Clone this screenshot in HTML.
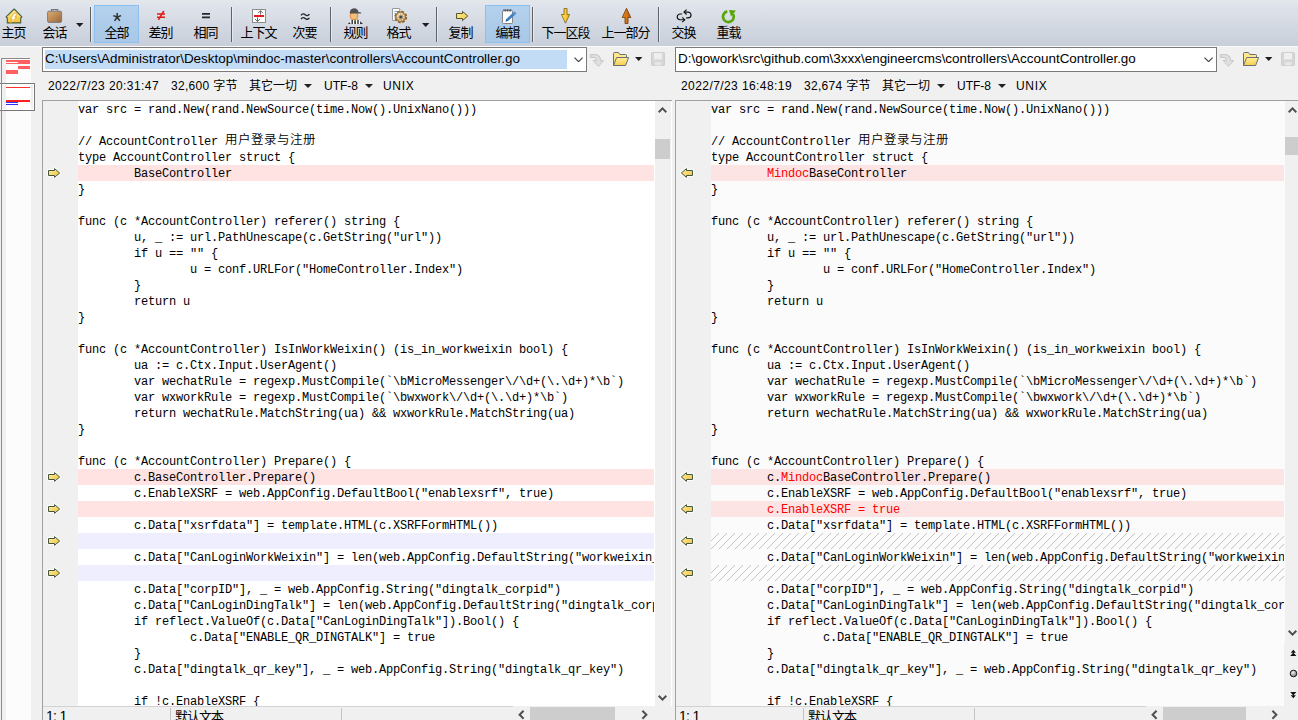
<!DOCTYPE html>
<html lang="zh-CN">
<head>
<meta charset="utf-8">
<title>AccountController.go &lt;--&gt; AccountController.go - 文本比较 - Beyond Compare</title>
<style>
*{box-sizing:border-box;margin:0;padding:0}
html,body{width:1298px;height:720px;overflow:hidden;background:#f0f0f0}
body{position:relative;font-family:"Liberation Sans","Noto Sans CJK SC",sans-serif;font-size:12px;color:#000}
.abs{position:absolute}
/* toolbar */
#tb{position:absolute;left:0;top:0;width:1298px;height:46px;background:linear-gradient(#e3e7ea 0,#e3e7ea 2px,#e0e4ec 4px,#d4d9e3 24px,#c8cfda 46px)}
#tbline{position:absolute;left:0;top:46px;width:1298px;height:1px;background:#fafafa}
.hl{position:absolute;top:5px;height:38px;background:linear-gradient(#b4d1ed,#a8c8e6);border:1px solid #8cc0f0}
.lb{position:absolute;top:24px;width:40px;height:17px;line-height:17px;font-size:13px;letter-spacing:-1px;text-indent:-1px;text-align:center;white-space:nowrap}
.lb{display:flex;justify-content:center}
.sep{position:absolute;top:7px;width:1px;height:35px;background:#5e6269;box-shadow:1px 0 0 rgba(255,255,255,.45)}
.dd{position:absolute;width:0;height:0;border-left:4px solid transparent;border-right:4px solid transparent;border-top:4px solid #222}
/* path combos */
.combo{position:absolute;top:47px;height:25px;border:1px solid #7a7a7a;background:#fff}
.combo .tx{position:absolute;left:1px;top:0;height:21px;line-height:21px;font-size:13.45px;white-space:nowrap;padding:0 1px}
.combo .sel{position:absolute;left:2px;top:2px;width:522px;height:19px;background:#c3dcf5}
.info{position:absolute;top:78px;height:17px;line-height:17px;font-size:12px;white-space:nowrap}
.info span{position:absolute;top:0}
/* editor */
.ed{position:absolute;top:100px;height:606px;border-top:1px solid #a0a0a0;border-left:1px solid #a0a0a0;overflow:hidden}
.gut{position:absolute;left:0;top:0;width:35px;height:606px;background:#f0f0f0}
.ga{position:absolute;left:4px}
.code{position:absolute;left:35px;top:0;height:606px;overflow:hidden;font-family:"Liberation Mono","Noto Sans CJK SC",monospace;font-size:12px;letter-spacing:-0.2px;white-space:pre}
.ln{height:16px;line-height:18px;overflow:visible}
.ln.d{background:#ffe3e3}
.ln.u{background:#eeeeff}
.rp .ln.d{background:#fde4e4}
.ln.h{background:repeating-linear-gradient(135deg,#c6c6c6 0,#c6c6c6 0.61px,#fbfbfb 0.71px,#fbfbfb 5.47px,#c6c6c6 5.57px,#c6c6c6 5.657px)}
.r{color:#f00}
.cj{font-family:"Noto Sans CJK SC",sans-serif;font-size:12.5px;letter-spacing:0.5px;line-height:0;position:relative;top:-1.5px;font-weight:350}
.vs{position:absolute;top:0;width:17px;background:#f0f0f0}
.vs.l{background:linear-gradient(90deg,#f0f0f0 16px,#fff 16px)}
.vs .th{position:absolute;left:0;width:15px;background:#cdcdcd}
.vs svg{position:absolute;left:3px}
.st{position:absolute;top:707px;height:13px;font-size:14px;letter-spacing:-0.7px;line-height:18px;white-space:nowrap;overflow:hidden}
.st.cjs{top:707px;height:13px;line-height:20px;font-size:13px;letter-spacing:-1px}
.hs{position:absolute;top:707px;height:13px;background:#f0f0f0}
.hs .th{position:absolute;top:0;height:13px;background:#cdcdcd}
</style>
</head>
<body>
<svg width="0" height="0" style="position:absolute">
<defs>
<linearGradient id="gy" x1="0" y1="0" x2="1" y2="1"><stop offset="0" stop-color="#fff0a0"/><stop offset="1" stop-color="#f0c040"/></linearGradient>
<g id="arR"><path d="M1.5 3.5H7.5V1.6L12.7 6L7.5 10.4V8.5H1.5Z" fill="none" stroke="#fff" stroke-opacity="0.85" stroke-width="2.8" stroke-linejoin="round"/><path d="M1.5 3.5H7.5V1.6L12.7 6L7.5 10.4V8.5H1.5Z" fill="url(#gy)" stroke="#45563c" stroke-width="1" stroke-linejoin="miter"/></g>
<g id="arL"><path d="M12.5 3.5H6.5V1.6L1.3 6L6.5 10.4V8.5H12.5Z" fill="none" stroke="#fff" stroke-opacity="0.85" stroke-width="2.8" stroke-linejoin="round"/><path d="M12.5 3.5H6.5V1.6L1.3 6L6.5 10.4V8.5H12.5Z" fill="url(#gy)" stroke="#45563c" stroke-width="1" stroke-linejoin="miter"/></g>
</defs>
</svg>

<div id="tb"></div>
<div id="tbline"></div>

<!-- toolbar buttons -->
<div id="tbbtns">
<div class="hl" style="left:94px;width:45px"></div>
<div class="hl" style="left:485px;width:45px"></div>
<div class="lb" style="left:-6px">主页</div>
<div class="lb" style="left:35px">会话</div>
<div class="lb" style="left:97px">全部</div>
<div class="lb" style="left:141px">差别</div>
<div class="lb" style="left:186px">相同</div>
<div class="lb" style="left:239px">上下文</div>
<div class="lb" style="left:285px">次要</div>
<div class="lb" style="left:336px">规则</div>
<div class="lb" style="left:379px">格式</div>
<div class="lb" style="left:441px">复制</div>
<div class="lb" style="left:488px">编辑</div>
<div class="lb" style="left:546px">下一区段</div>
<div class="lb" style="left:606px">上一部分</div>
<div class="lb" style="left:664px">交换</div>
<div class="lb" style="left:709px">重载</div>
<div class="sep" style="left:90px"></div>
<div class="sep" style="left:231px"></div>
<div class="sep" style="left:330px"></div>
<div class="sep" style="left:436px"></div>
<div class="sep" style="left:532px"></div>
<div class="sep" style="left:658px"></div>
<svg id="tbicons" class="abs" style="left:0;top:0" width="760" height="46" viewBox="0 0 760 46">
<defs>
<linearGradient id="gHome" x1="0" y1="0" x2="0" y2="1"><stop offset="0" stop-color="#fff2a0"/><stop offset="1" stop-color="#f5c030"/></linearGradient>
<linearGradient id="gCase" x1="0" y1="0" x2="1" y2="1"><stop offset="0" stop-color="#dcae70"/><stop offset="1" stop-color="#99663a"/></linearGradient>
<linearGradient id="gYel" x1="0" y1="0" x2="1" y2="1"><stop offset="0" stop-color="#fff09a"/><stop offset="1" stop-color="#f2c53a"/></linearGradient>
<linearGradient id="gOr" x1="0" y1="0" x2="1" y2="0"><stop offset="0" stop-color="#e8902a"/><stop offset="1" stop-color="#b85a08"/></linearGradient>
<linearGradient id="gDn" x1="0" y1="0" x2="1" y2="0"><stop offset="0" stop-color="#ffe860"/><stop offset="1" stop-color="#f5b010"/></linearGradient>
<radialGradient id="gGear" cx="0.4" cy="0.35" r="0.7"><stop offset="0" stop-color="#f3dca8"/><stop offset="1" stop-color="#a87830"/></radialGradient>
</defs>
<!-- home -->
<g transform="translate(6,8)">
<path d="M8.2 1L15.9 8.9L15 9.8H14.7V14.9H1.3V9.8H1L0.1 8.9Z" fill="url(#gHome)" stroke="#45603a" stroke-width="1.1" stroke-linejoin="round"/>
<path d="M8 5.2H11.6L8.8 9.2H10.8L3.9 15.4L6.3 10.9H4.5Z" fill="#fffef4" stroke="#dba11a" stroke-width="0.7" stroke-linejoin="round"/>
</g>
<!-- briefcase -->
<g transform="translate(47,8)">
<path d="M4.6 3V1.6H10.6V3" fill="#e6e6e6" stroke="#777" stroke-width="1.3"/>
<rect x="0.6" y="3.2" width="14" height="11.2" rx="1.4" fill="url(#gCase)" stroke="#7c7c7c" stroke-width="1"/>
</g>
<path d="M76 23h7.4l-3.7 4z" fill="#1e1e1e"/>
<!-- all * -->
<g stroke="#333" stroke-width="1.5" stroke-linecap="butt"><path d="M117.2 17V12.9M117.2 17L121.1 15.6M117.2 17L113.3 15.6M117.2 17L119.8 20.9M117.2 17L114.6 20.9"/></g>
<!-- not equal -->
<g stroke="#e21b1b" stroke-width="1.6"><path d="M157 14H165M157 17.2H165M163.8 11L158.4 19.8"/></g>
<!-- equal -->
<g stroke="#262626" stroke-width="1.7"><path d="M202 13.8H210M202 17.3H210"/></g>
<!-- context -->
<rect x="252.5" y="9.5" width="13" height="13" fill="#fff" stroke="#8c8c8c"/>
<rect x="254" y="15" width="10" height="2" fill="#e21b1b"/>
<g stroke="#6a6a6a" stroke-width="1" fill="none"><path d="M260.5 14.6V10.6M258 13.2L260.5 10.7L263 13.2M257.5 17.4V21.6M255 19L257.5 21.5L260 19"/></g>
<!-- minor -->
<g stroke="#262626" stroke-width="1.3" fill="none"><path d="M301 15.4q2-2.6 4.2-.6t4.2-.6M301 19q2-2.6 4.2-.6t4.2-.6"/></g>
<!-- referee -->
<g transform="translate(347.5,8)">
<path d="M0.4 16L3.2 12.4Q7.6 10.6 12 12.4L15.4 16Z" fill="#fff"/>
<path d="M0.4 16L1.6 14.4H2.8V16ZM4 16V12L5.4 11.6V16ZM6.8 16V12.6L8.4 12.6V16ZM9.8 16V11.6L11.2 12V16ZM12.6 16V13.2L14 14.4L15.4 16Z" fill="#2a2a2a"/>
<circle cx="6.5" cy="7.9" r="3.9" fill="#f4bd78" stroke="#e0803a" stroke-width="0.9"/>
<path d="M2.2 5.2Q2.4 0.4 6.6 0.2Q10.4 0.4 11 4L13.6 4.6V5.4H2.2Z" fill="#515151"/>
<circle cx="7.6" cy="12.4" r="0.8" fill="#4a9a3a"/>
</g>
<!-- format -->
<g>
<path d="M392.5 8.5H399.5L402.5 11.5V20.5H392.5Z" fill="#fff" stroke="#9a9a9a"/>
<path d="M399.5 8.5V11.5H402.5" fill="#e8e8e8" stroke="#9a9a9a" stroke-width="0.8"/>
<path d="M394.5 11.5H399M394.5 13.5H397.5M394.5 15.5H396.5M394.5 17.5H396" stroke="#7ea2d8" stroke-width="1"/>
<g transform="translate(400.8,17)">
<circle r="5.5" fill="none" stroke="#94682a" stroke-width="1.8" stroke-dasharray="2.6 1.72"/>
<circle r="4.9" fill="url(#gGear)" stroke="#8a6224" stroke-width="0.7"/>
<circle r="3.2" fill="none" stroke="#fff" stroke-opacity="0.8" stroke-width="1.1" stroke-dasharray="1.3 1.21"/>
<circle r="1.8" fill="#454545" stroke="#9a9a9a" stroke-width="0.8"/>
</g>
</g>
<path d="M422 23h7.4l-3.7 4z" fill="#1e1e1e"/>
<!-- copy -->
<path d="M456.5 13.5H462.5V11.4L467.8 16L462.5 20.6V18.5H456.5Z" fill="url(#gYel)" stroke="#55562c" stroke-width="1" stroke-linejoin="miter"/>
<!-- edit -->
<g>
<rect x="502.5" y="10.5" width="10" height="13" rx="0.8" fill="#fff" stroke="#858585"/>
<path d="M504 9V11.6M505.7 9V11.6M507.4 9V11.6M509.1 9V11.6M510.8 9V11.6" stroke="#444" stroke-width="0.8"/>
<path d="M514.2 11.4L516.4 13.4L508.4 20.8L505.6 21.6L506.4 19Z" fill="#3f7fc4"/>
<path d="M505.6 21.6L506.4 19L508.4 20.8Z" fill="#2c5c98"/>
<path d="M513 12.6L515.2 14.6" stroke="#9cc0e8" stroke-width="0.8"/>
</g>
<!-- next -->
<path d="M564 8.5H567V14.5H569.6L565.5 23.2L561.4 14.5H564Z" fill="url(#gDn)" stroke="#8a6a20" stroke-width="0.9" stroke-linejoin="round"/>
<!-- prev -->
<path d="M626.5 8.3L630.8 17.5H628V23.5H625V17.5H622.2Z" fill="url(#gOr)" stroke="#7e420c" stroke-width="0.9" stroke-linejoin="round"/>
<!-- swap -->
<g fill="none" stroke="#111" stroke-width="1.15">
<path d="M684.2 12.1H688A3 2.85 0 0 1 688 17.8H686.2"/>
<path d="M686.6 9.7L684 12.1L686.6 14.5"/>
<path d="M684.4 19.7H680.2A3 2.85 0 0 1 680.2 14H682.2"/>
<path d="M682.2 17.3L684.8 19.7L682.2 22.1"/>
</g>
<!-- reload -->
<g>
<path d="M727.3 11.4A5.4 5.4 0 1 0 733 13.9" fill="none" stroke="#5aa60a" stroke-width="2.7"/>
<path d="M729 9.9L736 10.6L731 16.4Z" fill="#5aa60a"/>
</g>
</svg>
</div>

<!-- thumbnail -->
<div id="thumb">
<div class="abs" style="left:1px;top:58px;width:29px;height:1px;background:#8a8a8a"></div>
<div class="abs" style="left:6px;top:59px;width:25px;height:661px;background:#fcfcfc"></div>
<div class="abs" style="left:6px;top:60px;width:24px;height:4px;background:#ff5f5f"></div>
<div class="abs" style="left:6px;top:62px;width:12px;height:1px;background:#fff"></div>
<div class="abs" style="left:18px;top:66px;width:12px;height:3px;background:#ff5f5f"></div>
<div class="abs" style="left:6px;top:70px;width:12px;height:4px;background:#ff5f5f"></div>
<div class="abs" style="left:-1px;top:83px;width:36px;height:28px;border:1px solid #787878;background:none;box-shadow:inset 0 0 0 1px rgba(255,255,255,.85)"></div>
<div class="abs" style="left:6px;top:84px;width:25px;height:26px;background:#fff"></div>
<div class="abs" style="left:6px;top:87px;width:24px;height:1px;background:#ff3030"></div>
<div class="abs" style="left:6px;top:100px;width:24px;height:2px;background:#ff2020"></div>
<div class="abs" style="left:6px;top:102px;width:12px;height:1px;background:#3030ff"></div>
<div class="abs" style="left:6px;top:104px;width:12px;height:1px;background:#3030ff"></div>
<div class="abs" style="left:1px;top:58px;width:1px;height:662px;background:#8a8a8a"></div>
</div>

<!-- left path -->
<div class="combo" style="left:42px;width:545px"><div class="sel"></div><div class="tx" id="lpath">C:\Users\Administrator\Desktop\mindoc-master\controllers\AccountController.go</div>
<svg class="abs" style="right:3px;top:8.7px" width="9.2" height="5.6" viewBox="0 0 9.2 5.6"><path d="M0.5 0.6L4.6 4.7L8.7 0.6" fill="none" stroke="#444" stroke-width="1.15"/></svg></div>
<div class="info" style="left:48px" id="linfo"><span style="left:0;letter-spacing:0.42px">2022/7/23 20:31:47</span><span style="left:123px;letter-spacing:0.3px">32,600 字节</span><span style="left:201px">其它一切</span><span style="left:276px">UTF-8</span><span style="left:335px;letter-spacing:0.7px">UNIX</span></div>
<div class="dd" style="left:304px;top:84px"></div>
<div class="dd" style="left:364.5px;top:84px"></div>

<!-- right path -->
<div class="combo" style="left:675px;width:542px"><div class="tx" id="rpath">D:\gowork\src\github.com\3xxx\engineercms\controllers\AccountController.go</div>
<svg class="abs" style="right:3px;top:8.7px" width="9.2" height="5.6" viewBox="0 0 9.2 5.6"><path d="M0.5 0.6L4.6 4.7L8.7 0.6" fill="none" stroke="#444" stroke-width="1.15"/></svg></div>
<div class="info" style="left:681px" id="rinfo"><span style="left:0;letter-spacing:0.42px">2022/7/23 16:48:19</span><span style="left:123px;letter-spacing:0.3px">32,674 字节</span><span style="left:201px">其它一切</span><span style="left:276px">UTF-8</span><span style="left:335px;letter-spacing:0.7px">UNIX</span></div>
<div class="dd" style="left:937px;top:84px"></div>
<div class="dd" style="left:997.5px;top:84px"></div>


<!-- path icons -->
<svg class="abs" style="left:588px;top:50px" width="82" height="20" viewBox="588 50 82 20">
<defs>
<linearGradient id="gFo" x1="0" y1="0" x2="0" y2="1"><stop offset="0" stop-color="#fff0a0"/><stop offset="1" stop-color="#f5cc48"/></linearGradient>
<g id="pic">
<path d="M590.4 54.6H595Q600.6 54.8 600.6 60.6H603.6L598.4 66.4L593.2 60.6H596.4Q596.4 57.6 594 57.4H590.4Z" fill="#e0e0e0" stroke="#bebebe" stroke-width="0.8" stroke-linejoin="round"/>
<path d="M613.5 65.5V53.4Q613.5 52.5 614.4 52.5H618.4L619.8 54.5H625.6Q626.5 54.5 626.5 55.4V57.5" fill="#ffe98c" stroke="#6a6e75" stroke-width="1" stroke-linejoin="round"/>
<path d="M613.5 65.5L616.6 57.5H628.6L625.6 65.5Z" fill="url(#gFo)" stroke="#6a6e75" stroke-width="1" stroke-linejoin="round"/>
<path d="M635 57h7.4l-3.7 4z" fill="#1e1e1e"/>
<rect x="651.5" y="52.5" width="13" height="13" rx="0.8" fill="#d6d6d6" stroke="#cfcfcf"/>
<rect x="654" y="53" width="8" height="6.4" fill="#efefef"/>
<rect x="655" y="62" width="6.4" height="3.4" fill="#e6e6e6"/>
</g>
</defs>
<use href="#pic"/>
</svg>
<svg class="abs" style="left:1218px;top:50px" width="80" height="20" viewBox="588 50 80 20"><use href="#pic"/></svg>

<!-- left editor -->
<div class="ed" style="left:42px;width:630px;background:#fff">
<div class="gut">
<svg class="ga" style="top:66px" width="14" height="12" viewBox="0 0 14 12"><use href="#arR"/></svg>
<svg class="ga" style="top:370px" width="14" height="12" viewBox="0 0 14 12"><use href="#arR"/></svg>
<svg class="ga" style="top:402px" width="14" height="12" viewBox="0 0 14 12"><use href="#arR"/></svg>
<svg class="ga" style="top:434px" width="14" height="12" viewBox="0 0 14 12"><use href="#arR"/></svg>
<svg class="ga" style="top:466px" width="14" height="12" viewBox="0 0 14 12"><use href="#arR"/></svg>
</div>
<div class="code" style="width:576px"><div class="ln">var src = rand.New(rand.NewSource(time.Now().UnixNano()))</div><div class="ln"></div><div class="ln">// AccountController <span class="cj">用户登录与注册</span></div><div class="ln">type AccountController struct {</div><div class="ln d">        BaseController</div><div class="ln">}</div><div class="ln"></div><div class="ln">func (c *AccountController) referer() string {</div><div class="ln">        u, _ := url.PathUnescape(c.GetString("url"))</div><div class="ln">        if u == "" {</div><div class="ln">                u = conf.URLFor("HomeController.Index")</div><div class="ln">        }</div><div class="ln">        return u</div><div class="ln">}</div><div class="ln"></div><div class="ln">func (c *AccountController) IsInWorkWeixin() (is_in_workweixin bool) {</div><div class="ln">        ua := c.Ctx.Input.UserAgent()</div><div class="ln">        var wechatRule = regexp.MustCompile(`\bMicroMessenger\/\d+(\.\d+)*\b`)</div><div class="ln">        var wxworkRule = regexp.MustCompile(`\bwxwork\/\d+(\.\d+)*\b`)</div><div class="ln">        return wechatRule.MatchString(ua) &amp;&amp; wxworkRule.MatchString(ua)</div><div class="ln">}</div><div class="ln"></div><div class="ln">func (c *AccountController) Prepare() {</div><div class="ln d">        c.BaseController.Prepare()</div><div class="ln">        c.EnableXSRF = web.AppConfig.DefaultBool("enablexsrf", true)</div><div class="ln d"></div><div class="ln">        c.Data["xsrfdata"] = template.HTML(c.XSRFFormHTML())</div><div class="ln u"></div><div class="ln">        c.Data["CanLoginWorkWeixin"] = len(web.AppConfig.DefaultString("workweixin_corpid", "")) &gt; 0</div><div class="ln u"></div><div class="ln">        c.Data["corpID"], _ = web.AppConfig.String("dingtalk_corpid")</div><div class="ln">        c.Data["CanLoginDingTalk"] = len(web.AppConfig.DefaultString("dingtalk_corpid", "")) &gt; 0</div><div class="ln">        if reflect.ValueOf(c.Data["CanLoginDingTalk"]).Bool() {</div><div class="ln">                c.Data["ENABLE_QR_DINGTALK"] = true</div><div class="ln">        }</div><div class="ln">        c.Data["dingtalk_qr_key"], _ = web.AppConfig.String("dingtalk_qr_key")</div><div class="ln"></div><div class="ln">        if !c.EnableXSRF {</div></div>
<div class="vs l" style="left:612px;height:606px"><div class="th" style="top:38px;height:20px"></div>
<svg style="top:6px" width="9" height="6" viewBox="0 0 9 6"><path d="M0.7 5.2L4.5 1.4L8.3 5.2" fill="none" stroke="#505050" stroke-width="2"/></svg>
<svg style="top:594px" width="9" height="6" viewBox="0 0 9 6"><path d="M0.7 0.8L4.5 4.6L8.3 0.8" fill="none" stroke="#505050" stroke-width="2"/></svg>
</div>
</div>
<!-- left status -->
<div class="abs" style="left:42px;top:706px;width:1px;height:14px;background:#a0a0a0"></div>
<div class="abs" style="left:43px;top:706px;width:470px;height:1px;background:#d2d2d2"></div>
<div class="st" style="left:46px;width:120px">1: 1</div>
<div class="abs" style="left:170px;top:708px;width:1px;height:12px;background:#c4c4c4"></div>
<div class="st cjs" style="left:175px;width:120px">默认文本</div>
<div class="abs" style="left:341px;top:708px;width:1px;height:12px;background:#c4c4c4"></div>
<div class="hs" style="left:513px;width:140px"><div class="th" style="left:17px;width:85px"></div>
<svg class="abs" style="left:5px;top:3px" width="7" height="10" viewBox="0 0 7 10"><path d="M5.6 0.8L1.6 4.8L5.6 8.8" fill="none" stroke="#505050" stroke-width="2"/></svg>
<svg class="abs" style="left:128px;top:3px" width="7" height="10" viewBox="0 0 7 10"><path d="M1.4 0.8L5.4 4.8L1.4 8.8" fill="none" stroke="#505050" stroke-width="2"/></svg>
</div>

<!-- right editor -->
<div class="ed" style="left:675px;width:623px;background:#fbfbfb">
<div class="gut">
<svg class="ga" style="top:66px" width="14" height="12" viewBox="0 0 14 12"><use href="#arL"/></svg>
<svg class="ga" style="top:370px" width="14" height="12" viewBox="0 0 14 12"><use href="#arL"/></svg>
<svg class="ga" style="top:402px" width="14" height="12" viewBox="0 0 14 12"><use href="#arL"/></svg>
<svg class="ga" style="top:434px" width="14" height="12" viewBox="0 0 14 12"><use href="#arL"/></svg>
<svg class="ga" style="top:466px" width="14" height="12" viewBox="0 0 14 12"><use href="#arL"/></svg>
</div>
<div class="code rp" style="width:573px"><div class="ln">var src = rand.New(rand.NewSource(time.Now().UnixNano()))</div><div class="ln"></div><div class="ln">// AccountController <span class="cj">用户登录与注册</span></div><div class="ln">type AccountController struct {</div><div class="ln d">        <span class="r">Mindoc</span>BaseController</div><div class="ln">}</div><div class="ln"></div><div class="ln">func (c *AccountController) referer() string {</div><div class="ln">        u, _ := url.PathUnescape(c.GetString("url"))</div><div class="ln">        if u == "" {</div><div class="ln">                u = conf.URLFor("HomeController.Index")</div><div class="ln">        }</div><div class="ln">        return u</div><div class="ln">}</div><div class="ln"></div><div class="ln">func (c *AccountController) IsInWorkWeixin() (is_in_workweixin bool) {</div><div class="ln">        ua := c.Ctx.Input.UserAgent()</div><div class="ln">        var wechatRule = regexp.MustCompile(`\bMicroMessenger\/\d+(\.\d+)*\b`)</div><div class="ln">        var wxworkRule = regexp.MustCompile(`\bwxwork\/\d+(\.\d+)*\b`)</div><div class="ln">        return wechatRule.MatchString(ua) &amp;&amp; wxworkRule.MatchString(ua)</div><div class="ln">}</div><div class="ln"></div><div class="ln">func (c *AccountController) Prepare() {</div><div class="ln d">        c.<span class="r">Mindoc</span>BaseController.Prepare()</div><div class="ln">        c.EnableXSRF = web.AppConfig.DefaultBool("enablexsrf", true)</div><div class="ln d">        <span class="r">c.EnableXSRF = true</span></div><div class="ln">        c.Data["xsrfdata"] = template.HTML(c.XSRFFormHTML())</div><div class="ln h"></div><div class="ln">        c.Data["CanLoginWorkWeixin"] = len(web.AppConfig.DefaultString("workweixin_corpid", "")) &gt; 0</div><div class="ln h"></div><div class="ln">        c.Data["corpID"], _ = web.AppConfig.String("dingtalk_corpid")</div><div class="ln">        c.Data["CanLoginDingTalk"] = len(web.AppConfig.DefaultString("dingtalk_corpid", "")) &gt; 0</div><div class="ln">        if reflect.ValueOf(c.Data["CanLoginDingTalk"]).Bool() {</div><div class="ln">                c.Data["ENABLE_QR_DINGTALK"] = true</div><div class="ln">        }</div><div class="ln">        c.Data["dingtalk_qr_key"], _ = web.AppConfig.String("dingtalk_qr_key")</div><div class="ln"></div><div class="ln">        if !c.EnableXSRF {</div></div>
<div class="vs l" style="left:609px;height:541px"><div class="th" style="top:36px;height:18px"></div>
<svg style="top:6px;left:3px" width="9" height="6" viewBox="0 0 9 6"><path d="M0.7 5.2L4.5 1.4L8.3 5.2" fill="none" stroke="#505050" stroke-width="2"/></svg>
<svg style="top:529px;left:3px" width="9" height="6" viewBox="0 0 9 6"><path d="M0.7 0.8L4.5 4.6L8.3 0.8" fill="none" stroke="#505050" stroke-width="2"/></svg>
</div>
<div class="abs" style="left:608px;top:541px;width:18px;height:65px;background:#f0f0f0"></div>
<svg class="abs" style="left:612px;top:547px" width="12" height="54" viewBox="1288 648 12 54">
<defs><radialGradient id="gBall" cx="0.4" cy="0.35" r="0.7"><stop offset="0" stop-color="#f4f4f4"/><stop offset="1" stop-color="#6e6e6e"/></radialGradient></defs>
<path d="M1293.3 649.8L1295.9 652.8H1290.7ZM1293.3 652.4L1296.4 656H1290.2Z" fill="#111"/>
<circle cx="1293.5" cy="673.5" r="3.3" fill="url(#gBall)" stroke="#1a1a1a" stroke-width="1"/>
<path d="M1290.2 692H1296.4L1293.3 695.6ZM1290.7 695.2H1295.9L1293.3 698.2Z" fill="#111"/>
</svg>
</div>
<!-- right status -->
<div class="abs" style="left:675px;top:706px;width:1px;height:14px;background:#a0a0a0"></div>
<div class="abs" style="left:676px;top:706px;width:470px;height:1px;background:#d2d2d2"></div>
<div class="st" style="left:679px;width:120px">1: 1</div>
<div class="abs" style="left:803px;top:708px;width:1px;height:12px;background:#c4c4c4"></div>
<div class="st cjs" style="left:808px;width:120px">默认文本</div>
<div class="abs" style="left:974px;top:708px;width:1px;height:12px;background:#c4c4c4"></div>
<div class="hs" style="left:1146px;width:137px"><div class="th" style="left:17px;width:83px"></div>
<svg class="abs" style="left:5px;top:3px" width="7" height="10" viewBox="0 0 7 10"><path d="M5.6 0.8L1.6 4.8L5.6 8.8" fill="none" stroke="#505050" stroke-width="2"/></svg>
<svg class="abs" style="left:125px;top:3px" width="7" height="10" viewBox="0 0 7 10"><path d="M1.4 0.8L5.4 4.8L1.4 8.8" fill="none" stroke="#505050" stroke-width="2"/></svg>
</div>

</body>
</html>
